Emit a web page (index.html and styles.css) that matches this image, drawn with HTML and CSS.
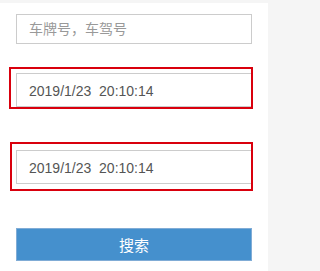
FILE: index.html
```html
<!DOCTYPE html>
<html lang="zh-CN">
<head>
<meta charset="utf-8">
<title>搜索</title>
<link rel="stylesheet" href="styles.css">
</head>
<body>
<div class="panel">
  <input class="input plate" type="text" placeholder="车牌号，车驾号">
  <div class="field field-start">
    <input class="input date" type="text" value="2019/1/23  20:10:14">
    <span class="mark mark-start"></span>
  </div>
  <div class="field field-end">
    <input class="input date" type="text" value="2019/1/23  20:10:14">
    <span class="mark mark-end"></span>
  </div>
  <button class="search" type="button">搜索</button>
</div>
</body>
</html>
```
FILE: styles.css
```css
html, body {
  margin: 0;
  padding: 0;
  background: #f5f5f5;
  height: 100%;
}
body {
  font-family: "Liberation Sans", "Noto Sans CJK SC", Arial, sans-serif;
  font-size: 14px;
}
.panel {
  margin-top: 3px;
  width: 268px;
  min-height: 268px;
  background: #ffffff;
  box-sizing: border-box;
  padding: 11px 0 0 16px;
  display: flex;
  flex-direction: column;
}
.input {
  display: block;
  box-sizing: border-box;
  width: 236px;
  margin: 0;
  border: 1px solid #cccccc;
  border-radius: 0;
  background: #ffffff;
  padding: 0 12px;
  font-family: "Liberation Sans", "Noto Sans CJK SC", Arial, sans-serif;
  font-size: 14px;
  color: #555555;
  outline: none;
}
.plate {
  height: 30px;
}
.plate::placeholder {
  color: #999999;
  font-family: "Noto Sans CJK SC", "Liberation Sans", sans-serif;
}
.date {
  height: 34px;
  padding-top: 1px;
}
.field {
  position: relative;
  width: 236px;
}
.field-start {
  margin-top: 29px;
}
.field-end {
  margin-top: 43px;
}
.mark {
  position: absolute;
  border: 2px solid #d9000d;
  pointer-events: none;
}
.mark-start {
  top: -6px;
  bottom: -2px;
  left: -7px;
  right: -1px;
}
.mark-end {
  top: -8px;
  bottom: -7px;
  left: -6px;
  right: -1px;
}
.search {
  margin-top: 44px;
  width: 236px;
  height: 33px;
  box-sizing: border-box;
  border: 1px solid #80acd6;
  background: #4590cd;
  color: #ffffff;
  font-family: "Noto Sans CJK SC", "Liberation Sans", sans-serif;
  font-size: 15px;
  padding: 0;
  border-radius: 0;
}
```
